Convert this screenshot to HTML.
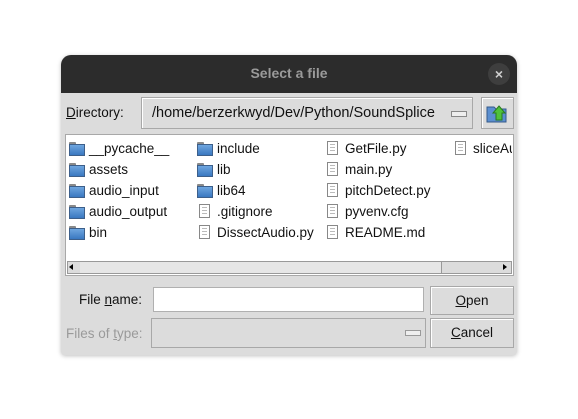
<!DOCTYPE html><html><head><style>
body{margin:0;width:578px;height:419px;background:#fff;font-family:"Liberation Sans",sans-serif;font-size:13.5px;color:#111;position:relative;overflow:hidden}
.a{position:absolute}
.win{left:61px;top:55px;width:456px;height:300px;background:#dcdcdc;border-radius:10px 10px 4px 4px;overflow:hidden;box-shadow:0 1px 4px rgba(0,0,0,.25)}
.tb{left:0;top:0;width:456px;height:38px;background:#2c2c2c;color:#9a9a9a;text-align:center;line-height:36px;font-weight:bold;font-size:14px}
.cls{left:427px;top:8px;width:22px;height:22px;border-radius:11px;background:#3e3e3e;color:#cfcfcf;text-align:center;line-height:22px;font-size:14px;font-weight:bold}
.btn{background:#dcdcdc;border:1px solid #a8a8a8;box-shadow:inset 1px 1px 0 #fff;box-sizing:border-box}
.it{position:absolute;height:20px;line-height:20px;white-space:nowrap}
.fd{display:inline-block;width:16px;height:13px;vertical-align:-2px;margin-right:4px;position:relative}
.fd:before{content:"";position:absolute;left:0;top:0;width:7px;height:3px;background:#8a8a8a;border-radius:1px 1px 0 0}
.fd:after{content:"";position:absolute;left:0;top:2px;width:14px;height:10px;background:linear-gradient(#6fa6df,#3a78c0);border:1px solid #3d5f8a}
.fl{display:inline-block;width:11px;height:14px;border:1px solid #888;background:repeating-linear-gradient(#fff 0 2px,#bbb 2px 3px);background-clip:content-box;padding:2px;box-sizing:border-box;vertical-align:-2px;margin-right:7px;margin-left:2px}
u{text-decoration:underline}
</style></head><body>
<div class="a win">
<div class="a tb">Select a file</div><div class="a cls">×</div>
</div>
<div class="a" style="left:66px;top:104px;line-height:18px"><u>D</u>irectory:</div>
<div class="a btn" style="left:141px;top:97px;width:332px;height:32px"></div>
<div class="a" style="left:152px;top:104px;line-height:18px;font-size:14.5px">/home/berzerkwyd/Dev/Python/SoundSplice</div>
<div class="a" style="left:451px;top:111px;width:14px;height:4px;border:1px solid #888;background:#eee"></div>
<div class="a btn" style="left:481px;top:97px;width:33px;height:32px"></div>
<svg class="a" style="left:485px;top:101px" width="24" height="24"><path d="M2 6h7l2 2h10v13H2z" fill="#5b8fd0" stroke="#355a8a"/><path d="M14 5l6 7h-3v7h-6v-7H8z" fill="#4fc23a" stroke="#2a7a1e"/></svg>
<div class="a" style="left:65px;top:134px;width:449px;height:142px;background:#fff;border:1px solid #a8a8a8;box-sizing:border-box"></div>
<div class="it" style="left:69px;top:139px"><span class="fd"></span>__pycache__</div>
<div class="it" style="left:69px;top:160px"><span class="fd"></span>assets</div>
<div class="it" style="left:69px;top:181px"><span class="fd"></span>audio_input</div>
<div class="it" style="left:69px;top:202px"><span class="fd"></span>audio_output</div>
<div class="it" style="left:69px;top:223px"><span class="fd"></span>bin</div>
<div class="it" style="left:197px;top:139px"><span class="fd"></span>include</div>
<div class="it" style="left:197px;top:160px"><span class="fd"></span>lib</div>
<div class="it" style="left:197px;top:181px"><span class="fd"></span>lib64</div>
<div class="it" style="left:197px;top:202px"><span class="fl"></span>.gitignore</div>
<div class="it" style="left:197px;top:223px"><span class="fl"></span>DissectAudio.py</div>
<div class="it" style="left:325px;top:139px"><span class="fl"></span>GetFile.py</div>
<div class="it" style="left:325px;top:160px"><span class="fl"></span>main.py</div>
<div class="it" style="left:325px;top:181px"><span class="fl"></span>pitchDetect.py</div>
<div class="it" style="left:325px;top:202px"><span class="fl"></span>pyvenv.cfg</div>
<div class="it" style="left:325px;top:223px"><span class="fl"></span>README.md</div>
<div class="it" style="left:453px;top:139px;width:59px;overflow:hidden"><span class="fl"></span>sliceAudio.py</div>
<div class="a" style="left:67px;top:261px;width:445px;height:13px;background:#dcdcdc;border:1px solid #999;box-sizing:border-box"></div>
<div class="a" style="left:80px;top:262px;width:361px;height:11px;background:#e6e6e6;border-right:1px solid #999"></div>
<div class="a" style="left:69px;top:264px;width:0;height:0;border:3px solid transparent;border-right:4px solid #000;border-left:0"></div>
<div class="a" style="left:503px;top:264px;width:0;height:0;border:3px solid transparent;border-left:4px solid #000;border-right:0"></div>
<div class="a" style="left:79px;top:291px;line-height:18px">File <u>n</u>ame:</div>
<div class="a" style="left:153px;top:287px;width:271px;height:25px;background:#fff;border:1px solid #b0b0b0;box-sizing:border-box"></div>
<div class="a btn" style="left:430px;top:286px;width:84px;height:29px;text-align:center;line-height:27px"><u>O</u>pen</div>
<div class="a" style="left:66px;top:325px;line-height:18px;color:#9a9a9a">Files of <u>t</u>ype:</div>
<div class="a btn" style="left:151px;top:318px;width:275px;height:30px;box-shadow:none"></div>
<div class="a" style="left:405px;top:330px;width:14px;height:4px;border:1px solid #999;background:#eee"></div>
<div class="a btn" style="left:430px;top:318px;width:84px;height:30px;text-align:center;line-height:28px"><u>C</u>ancel</div>
</body></html>
